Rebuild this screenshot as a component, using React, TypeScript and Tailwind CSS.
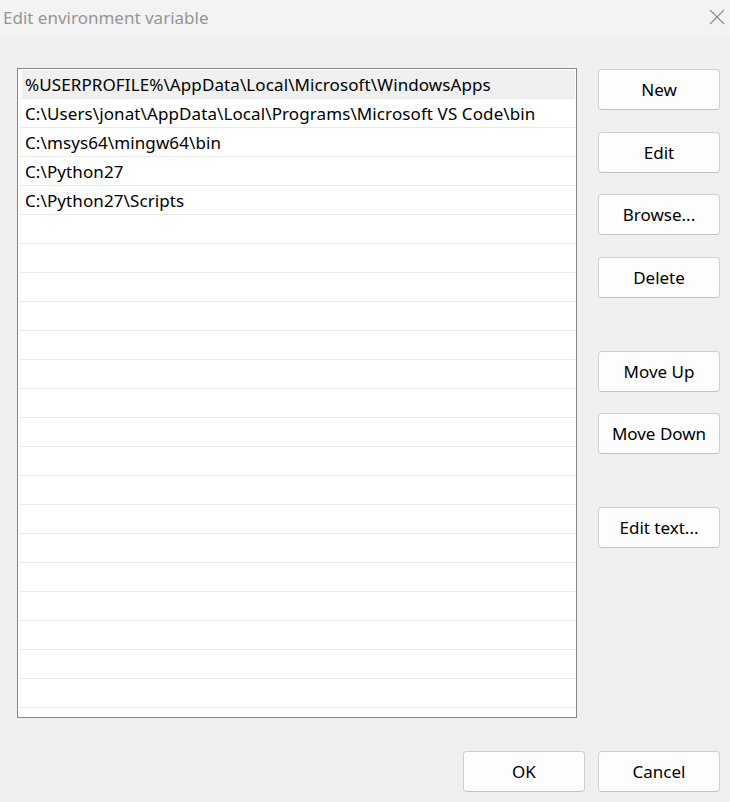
import React from "react";

const paths = [
  "%USERPROFILE%\\AppData\\Local\\Microsoft\\WindowsApps",
  "C:\\Users\\jonat\\AppData\\Local\\Programs\\Microsoft VS Code\\bin",
  "C:\\msys64\\mingw64\\bin",
  "C:\\Python27",
  "C:\\Python27\\Scripts",
];

const Button = ({ label, className = "" }: { label: string; className?: string }) => (
  <button
    className={
      "h-[41px] w-[122px] rounded-[4px] border border-[#d0d0d0] border-b-[#c2c2c2] bg-[#fdfdfd] pt-[1px] text-[17px] text-black " +
      className
    }
  >
    {label}
  </button>
);

const App: React.FC = () => {
  const rows = Array.from({ length: 22 }, (_, i) => paths[i] ?? "");

  return (
    <div
      className="flex h-[802px] w-[730px] flex-col bg-[#f0f0f0]"
      style={{ fontFamily: '"Noto Sans", "Open Sans", sans-serif' }}
    >
      {/* title bar */}
      <div className="flex h-[36px] items-center justify-between bg-[#f3f3f3] pl-[3px] pr-[5px]">
        <span className="text-[17px] text-[#959595]">Edit environment variable</span>
        <svg width="16" height="16" viewBox="0 0 16 16" className="mb-[2px]">
          <path d="M1 1 L15 15 M15 1 L1 15" stroke="#8a8a8a" strokeWidth="1.1" />
        </svg>
      </div>

      <div className="flex gap-[21px] pl-[17px] pt-[32px]">
        {/* list */}
        <div className="h-[650px] w-[560px] border border-[#828790] bg-white px-[1px] pt-[1px]">
          {rows.map((text, i) => (
            <div key={i} className="h-[29px] border-b border-[#ebebeb]">
              {i === 0 ? (
                <div className="ml-[3px] flex h-full items-center bg-[#f0f0f0] pl-[3px] pt-[2px] text-[17px] tracking-[0.1px] text-black">
                  {text}
                </div>
              ) : (
                <div className="flex h-full items-center pl-[6px] pt-[2px] text-[17px] tracking-[0.1px] text-black">
                  {text}
                </div>
              )}
            </div>
          ))}
        </div>

        {/* side buttons */}
        <div className="flex flex-col pt-[1px]">
          <Button label="New" />
          <Button label="Edit" className="mt-[22px]" />
          <Button label="Browse..." className="mt-[21px]" />
          <Button label="Delete" className="mt-[22px]" />
          <Button label="Move Up" className="mt-[53px]" />
          <Button label="Move Down" className="mt-[21px]" />
          <Button label="Edit text..." className="mt-[53px]" />
        </div>
      </div>

      {/* bottom buttons */}
      <div className="flex justify-end gap-[13px] pr-[10px] pt-[33px]">
        <Button label="OK" />
        <Button label="Cancel" />
      </div>
    </div>
  );
};

export default App;
